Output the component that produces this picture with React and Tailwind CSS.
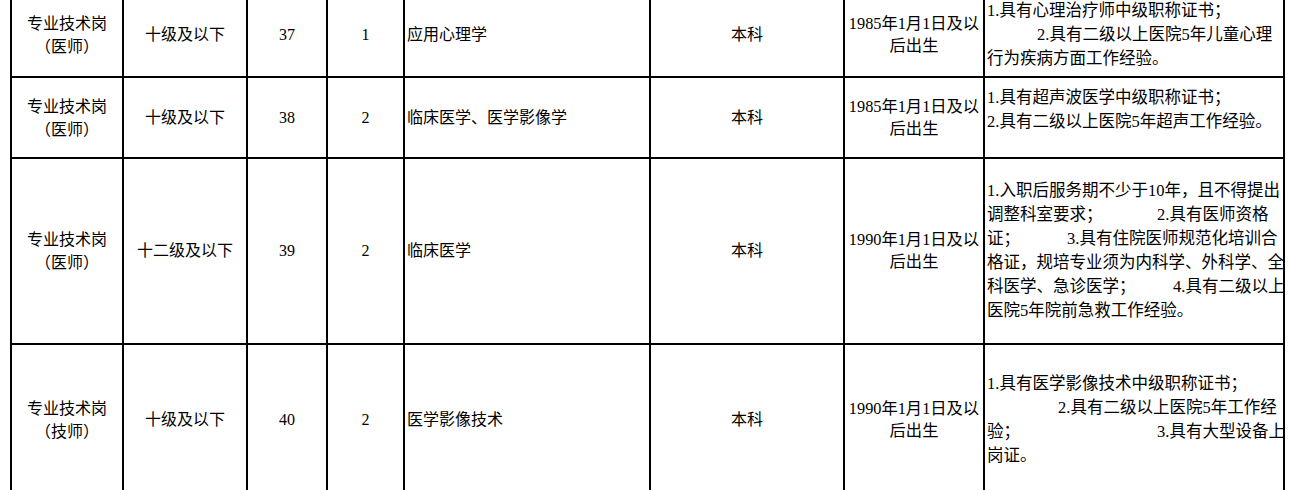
const ROWS = [
  {
    post: ['专业技术岗', '（医师）'],
    level: '十级及以下',
    code: '37',
    num: '1',
    major: '应用心理学',
    edu: '本科',
    birth: '1985年1月1日及以',
    reqBox: 'items-center',
    req: [
      { t: '1.具有心理治疗师中级职称证书；' },
      { t: '2.具有二级以上医院5年儿童心理', cls: 'pl-[50px]' },
      { t: '行为疾病方面工作经验。' },
    ],
  },
  {
    post: ['专业技术岗', '（医师）'],
    level: '十级及以下',
    code: '38',
    num: '2',
    major: '临床医学、医学影像学',
    edu: '本科',
    birth: '1985年1月1日及以',
    reqBox: 'items-start pt-[8px]',
    req: [
      { t: '1.具有超声波医学中级职称证书；' },
      { t: '2.具有二级以上医院5年超声工作经验。' },
    ],
  },
  {
    post: ['专业技术岗', '（医师）'],
    level: '十二级及以下',
    code: '39',
    num: '2',
    major: '临床医学',
    edu: '本科',
    birth: '1990年1月1日及以',
    reqBox: 'items-center',
    req: [
      { t: '1.入职后服务期不少于10年，且不得提出' },
      { a: '调整科室要求；', b: '2.具有医师资格', w: 'w-[170px]' },
      { a: '证；', b: '3.具有住院医师规范化培训合', w: 'w-[80px]' },
      { t: '格证，规培专业须为内科学、外科学、全' },
      { a: '科医学、急诊医学；', b: '4.具有二级以上', w: 'w-[186px]' },
      { t: '医院5年院前急救工作经验。' },
    ],
  },
  {
    post: ['专业技术岗', '（技师）'],
    level: '十级及以下',
    code: '40',
    num: '2',
    major: '医学影像技术',
    edu: '本科',
    birth: '1990年1月1日及以',
    reqBox: 'items-center',
    req: [
      { t: '1.具有医学影像技术中级职称证书；' },
      { t: '2.具有二级以上医院5年工作经', cls: 'pl-[71px]' },
      { a: '验；', b: '3.具有大型设备上', w: 'w-[170px]' },
      { t: '岗证。' },
    ],
  },
];

const cell = 'border-r-2 border-b-2 border-black overflow-hidden flex';
const centered = cell + ' items-center justify-center text-center';

function ReqLine({ line }) {
  if (line.a) {
    return (
      <div className="flex whitespace-nowrap">
        <span className={line.w + ' shrink-0'}>{line.a}</span>
        <span>{line.b}</span>
      </div>
    );
  }
  return <div className={'whitespace-nowrap ' + (line.cls || '')}>{line.t}</div>;
}

export default function App() {
  return (
    <div
      className="w-[1290px] h-[490px] overflow-hidden bg-white text-black text-[16px] leading-[24px]"
      style={{ fontFamily: '"Liberation Serif", "Noto Sans CJK SC", serif' }}
    >
      <div className="ml-[10px] -mt-[7px] w-[1275px] border-l-2 border-black grid grid-cols-[112px_124px_80px_77px_246px_194px_140px_300px] grid-rows-[85px_81px_186px_152px]">
        {ROWS.map((r) => (
          <div key={r.code} className="contents">
            <div className={centered + ' leading-[23px]'}>
              <div>
                <div>{r.post[0]}</div>
                <div>{r.post[1]}</div>
              </div>
            </div>
            <div className={centered}>{r.level}</div>
            <div className={centered}>{r.code}</div>
            <div className={centered}>{r.num}</div>
            <div className={cell + ' items-center pl-[2px] whitespace-nowrap'}>{r.major}</div>
            <div className={centered}>{r.edu}</div>
            <div className={centered + ' text-[16.3px] leading-[22px]'}>
              <div>
                <div className="whitespace-nowrap">{r.birth}</div>
                <div>后出生</div>
              </div>
            </div>
            <div className={cell + ' pl-[2px] text-[16.5px] ' + r.reqBox}>
              <div className="w-full">
                {r.req.map((line, i) => (
                  <ReqLine key={i} line={line} />
                ))}
              </div>
            </div>
          </div>
        ))}
      </div>
    </div>
  );
}
